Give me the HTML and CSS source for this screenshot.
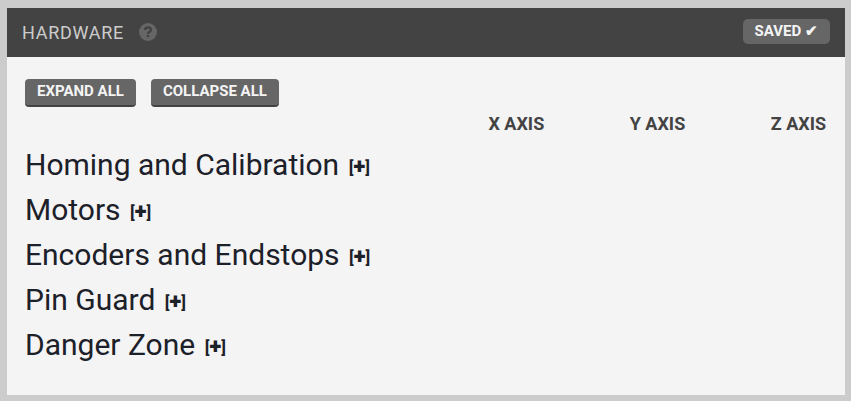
FILE: index.html
```html
<!DOCTYPE html>
<html lang="en">
<head>
  <meta charset="UTF-8">
  <title>Hardware</title>
  <link rel="stylesheet" href="styles.css">
</head>
<body>
  <div class="widget">
    <div class="widget-header">
      <h5>Hardware</h5>
      <svg class="help-icon" viewBox="0 0 18 18" width="18" height="18">
        <circle cx="9" cy="9" r="9" fill="#666"></circle>
        <path d="M6 7.100C6 5.300 7.300 4.300 9 4.300s3 1 3 2.500c0 2.300-3 2-3 4.100" fill="none" stroke="#434343" stroke-width="2.300"></path>
        <rect x="7.800" y="12" width="2.400" height="2.300" fill="#434343"></rect>
      </svg>
      <span class="status">Saved ✔</span>
    </div>
    <div class="widget-content">
      <div class="actions">
        <button>Expand all</button>
        <button>Collapse all</button>
      </div>
      <div class="axis-labels">
        <label>X Axis</label>
        <label>Y Axis</label>
        <label>Z Axis</label>
      </div>
      <div class="sections">
        <div class="section"><h4>Homing and Calibration</h4><span class="toggle">[<b>+</b>]</span></div>
        <div class="section"><h4>Motors</h4><span class="toggle">[<b>+</b>]</span></div>
        <div class="section"><h4>Encoders and Endstops</h4><span class="toggle">[<b>+</b>]</span></div>
        <div class="section"><h4>Pin Guard</h4><span class="toggle">[<b>+</b>]</span></div>
        <div class="section"><h4>Danger Zone</h4><span class="toggle">[<b>+</b>]</span></div>
      </div>
    </div>
  </div>
</body>
</html>
```

FILE: styles.css
```css
html, body {
  height: 100%;
}
body {
  margin: 0;
  padding: 8px 6px 6px 7px;
  box-sizing: border-box;
  background-color: #cccccc;
  font-family: Roboto, sans-serif;
  overflow: hidden;
}
.widget {
  height: 100%;
  background-color: #f4f4f4;
}
.widget-header {
  display: flex;
  align-items: center;
  height: 49px;
  padding: 0 15px;
  background-color: #434343;
}
.widget-header h5 {
  margin: 0 15px 0 0;
  font-size: 18px;
  font-weight: 400;
  letter-spacing: 0.7px;
  text-transform: uppercase;
  color: #cccccc;
}
.help-icon {
  display: block;
  margin-top: -1px;
}
.status {
  margin-left: auto;
  margin-top: -2px;
  padding: 0 12px;
  line-height: 25px;
  border-radius: 5px;
  background-color: #666666;
  color: #f4f4f4;
  font-size: 15px;
  font-weight: 700;
  text-transform: uppercase;
}
.widget-content {
  padding: 22px 19px 0 18px;
}
.actions {
  display: flex;
  gap: 15px;
}
.actions button {
  height: 28px;
  padding: 0 12px 3px;
  border: 0;
  border-bottom: 2px solid #434343;
  border-radius: 4px;
  background-color: #666666;
  color: #f4f4f4;
  font-family: Roboto, sans-serif;
  font-size: 15px;
  font-weight: 700;
  text-transform: uppercase;
}
.axis-labels {
  display: flex;
  justify-content: flex-end;
  gap: 85.500px;
  margin-top: 7px;
}
.axis-labels label {
  font-size: 18px;
  font-weight: 700;
  line-height: 20px;
  text-transform: uppercase;
  color: #434343;
}
.sections {
  margin-top: 8px;
}
.section {
  display: flex;
  align-items: center;
  gap: 9.500px;
  height: 45px;
  color: #1c2029;
}
.section h4 {
  margin: 0;
  font-size: 30px;
  font-weight: 400;
}
.toggle {
  font-size: 17px;
  font-weight: 700;
  line-height: 20px;
  padding-top: 5px;
}
.toggle b {
  font-size: 22px;
  font-weight: 900;
  line-height: 1;
  vertical-align: -1px;
}
```
